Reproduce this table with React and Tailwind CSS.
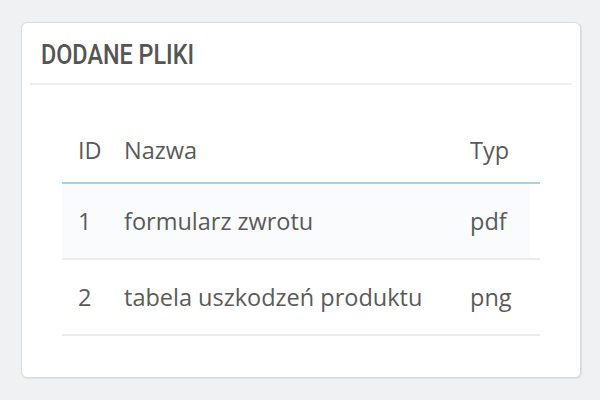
const files = [
  { id: 1, name: 'formularz zwrotu', type: 'pdf' },
  { id: 2, name: 'tabela uszkodzeń produktu', type: 'png' },
]

export default function App() {
  return (
    <div className="w-[600px] h-[400px] bg-[#eff1f2] pt-[22px] pl-[21px]">
      <div className="w-[560px] h-[356px] bg-white border border-[#d6dbde] rounded-[6px] shadow-[1px_1px_0_#dde1e3] px-[8px]">
        {/* panel heading */}
        <div className="h-[62px] flex items-center pl-[11px] pt-[3px] border-b-2 border-[#eeeeee]">
          <h2 className="text-[27.5px] leading-none font-medium text-[#555555] font-['Roboto',sans-serif] whitespace-nowrap origin-left scale-x-[0.85]">
            DODANE PLIKI
          </h2>
        </div>

        {/* files table */}
        <div className="mx-[32px] mt-[34px] text-[23.5px] text-[#5a5a5a] font-['Open_Sans',sans-serif]">
          <div className="grid grid-cols-[46px_346px_86px] h-[65px] items-center border-b-2 border-[#a3d2ea]">
            <span className="pl-[16px]">ID</span>
            <span className="pl-[16px]">Nazwa</span>
            <span className="pl-[16px]">Typ</span>
          </div>
          {files.map((f, i) => (
            <div key={f.id} className="flex border-b-2 border-[#ececec]">
              <div className={'grid grid-cols-[46px_346px_76px] w-[468px] h-[74px] items-center pt-[2px] ' + (i % 2 === 0 ? 'bg-[#fafbfc]' : 'bg-white')}>
                <span className="pl-[16px]">{f.id}</span>
                <span className="pl-[16px]">{f.name}</span>
                <span className="pl-[16px]">{f.type}</span>
              </div>
            </div>
          ))}
        </div>
      </div>
    </div>
  )
}
